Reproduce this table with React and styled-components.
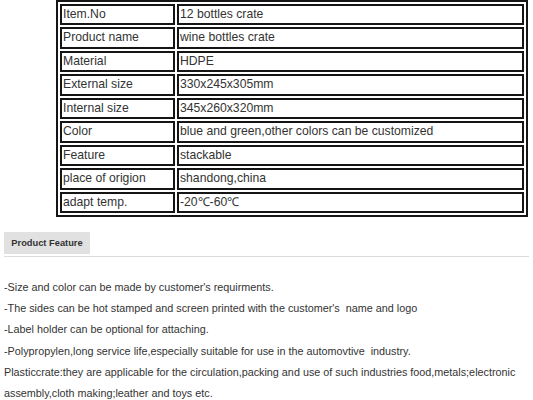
import React from 'react'
import styled, { createGlobalStyle } from 'styled-components'

const GlobalStyle = createGlobalStyle`
  html, body {
    margin: 0;
    padding: 0;
    background: #fff;
  }
  body {
    font-family: "Liberation Sans", Arial, sans-serif;
    color: #333;
  }
`

const Page = styled.div`
  width: 533px;
  padding: 0 4px;
  box-sizing: border-box;
`

const SpecTable = styled.table`
  margin: 0 0 0 52px;
  width: 472px;
  table-layout: fixed;
  border: 2px solid #151515;
  border-spacing: 2px;
  border-collapse: separate;
`

const Cell = styled.td`
  width: ${p => (p.$label ? '109px' : 'auto')};
  border: 2px solid #151515;
  padding: 0 1px;
  font-size: 12.2px;
  line-height: 17.45px;
  color: #333;
  white-space: nowrap;
  overflow: hidden;
`

const Tabs = styled.div`
  margin-top: 15px;
  border-bottom: 1px solid #dcdcdc;
  padding-bottom: 2px;
`

const Tab = styled.div`
  display: inline-flex;
  align-items: center;
  justify-content: center;
  width: 86px;
  height: 22px;
  background: #e1e1e1;
  font-size: 9.3px;
  font-weight: bold;
  color: #333;
`

const Features = styled.div`
  margin-top: 20px;
  font-size: 10.8px;
  line-height: 21.2px;
  color: #333;
`

const Line = styled.div`
  white-space: pre;
`

const specs = [
  ['Item.No', '12 bottles crate'],
  ['Product name', 'wine bottles crate'],
  ['Material', 'HDPE'],
  ['External size', '330x245x305mm'],
  ['Internal size', '345x260x320mm'],
  ['Color', 'blue and green,other colors can be customized'],
  ['Feature', 'stackable'],
  ['place of origion', 'shandong,china'],
  ['adapt temp.', '-20\u2103-60\u2103'],
]

const features = [
  "-Size and color can be made by customer's requirments.",
  "-The sides can be hot stamped and screen printed with the customer's  name and logo",
  '-Label holder can be optional for attaching.',
  '-Polypropylen,long service life,especially suitable for use in the automovtive  industry.',
  'Plasticcrate:they are applicable for the circulation,packing and use of such industries food,metals;electronic',
  'assembly,cloth making;leather and toys etc.',
]

export default function App() {
  return (
    <Page>
      <GlobalStyle />
      <SpecTable>
        <tbody>
          {specs.map(([k, v]) => (
            <tr key={k}>
              <Cell $label>{k}</Cell>
              <Cell>{v}</Cell>
            </tr>
          ))}
        </tbody>
      </SpecTable>
      <Tabs>
        <Tab>Product Feature</Tab>
      </Tabs>
      <Features>
        {features.map(f => (
          <Line key={f}>{f}</Line>
        ))}
      </Features>
    </Page>
  )
}
